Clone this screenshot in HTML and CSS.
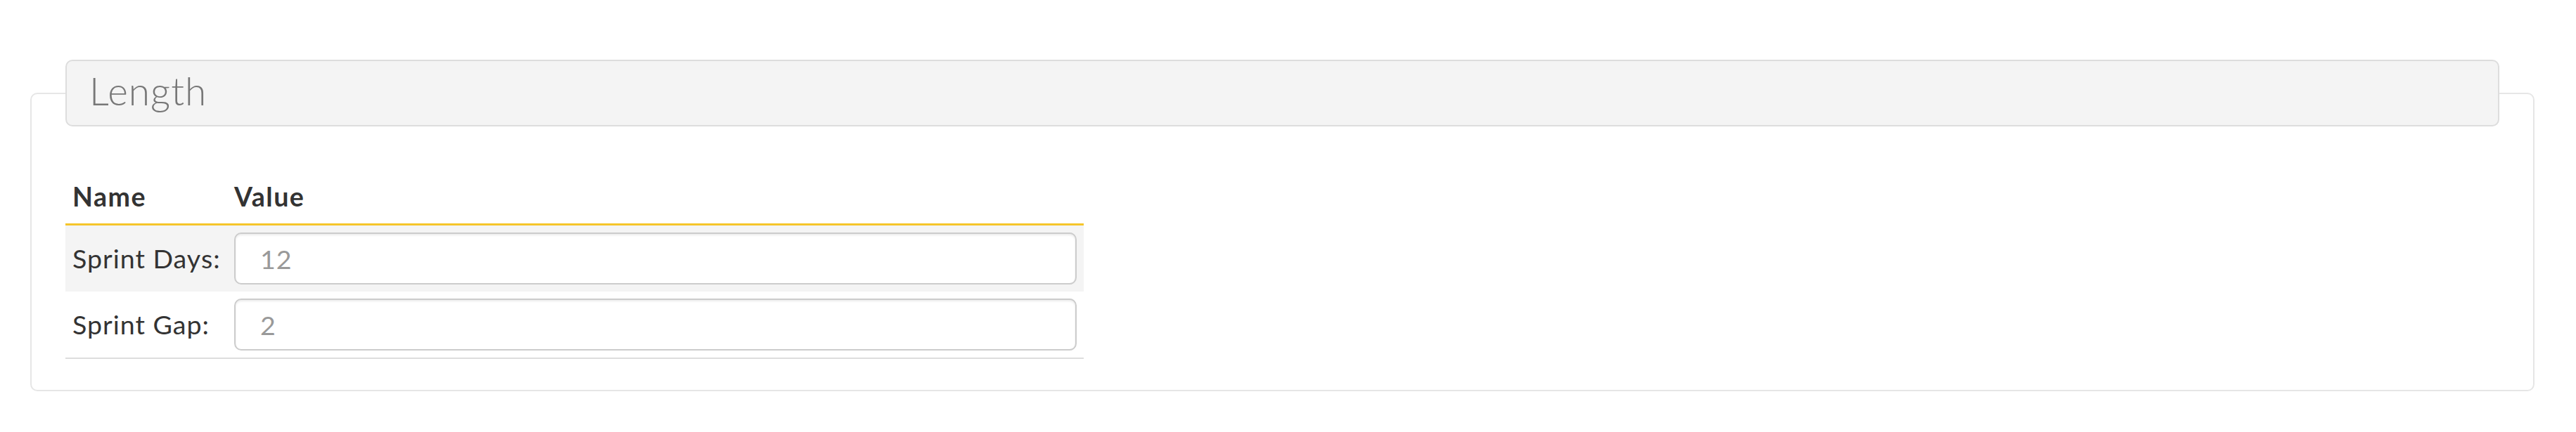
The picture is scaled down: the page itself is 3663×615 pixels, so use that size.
FILE: index.html
```html
<!DOCTYPE html>
<html lang="en">
<head>
  <meta charset="UTF-8">
  <meta name="viewport" content="width=device-width, initial-scale=1.0">
  <title>Sprint Settings</title>
  <link rel="stylesheet" href="styles.css">
</head>
<body>
  <!-- Sprint length settings -->
  <fieldset class="settings-group">
    <legend>Length</legend>
    <table class="settings-table">
      <thead>
        <tr>
          <th class="name-col">Name</th>
          <th>Value</th>
        </tr>
      </thead>
      <tbody>
        <tr class="striped">
          <td class="name-col"><label for="sprintDays">Sprint Days:</label></td>
          <td><input type="text" id="sprintDays" name="sprintDays" value="12"></td>
        </tr>
        <tr>
          <td class="name-col"><label for="sprintGap">Sprint Gap:</label></td>
          <td><input type="text" id="sprintGap" name="sprintGap" value="2"></td>
        </tr>
      </tbody>
    </table>
  </fieldset>
</body>
</html>
```

FILE: styles.css
```css
body {
  font-family: Lato, "Open Sans", sans-serif;
  font-size: 37.6px;
  line-height: 1.5;
  letter-spacing: 1px;
  color: #333;
  margin: 0;
  padding: 0;
  background-color: #fff;
}
.settings-group {
  margin: 85px 59px 0 43px;
  padding: 62px 48px 44px 48px;
  border: 2px solid #e6e6e6;
  border-radius: 10px;
  min-width: 0;
}
.settings-group legend {
  box-sizing: border-box;
  width: 100%;
  padding: 0 34px 6px 32px;
  background-color: #f4f4f4;
  border: 2px solid #ddd;
  border-radius: 10px;
  font-size: 55px;
  font-weight: 300;
  line-height: 85px;
  color: #777;
}
.settings-table {
  width: 1448px;
  border-collapse: collapse;
}
.settings-table th {
  text-align: left;
  font-weight: bold;
  letter-spacing: 1.5px;
  padding: 10px;
  border-bottom: 3px solid #f5c52a;
}
.settings-table td {
  padding: 10px;
  vertical-align: middle;
}
.settings-table .name-col {
  width: 212px;
  padding-right: 8px;
  white-space: nowrap;
}
.settings-table tr.striped td {
  background-color: #f4f4f4;
}
.settings-table tbody tr:last-child td {
  border-bottom: 2px solid #ddd;
}
.settings-table input {
  display: block;
  box-sizing: border-box;
  width: 100%;
  height: 74px;
  padding: 0 35px;
  font-family: inherit;
  font-size: 37.6px;
  letter-spacing: 1px;
  color: #999;
  background-color: #fff;
  border: 2px solid #ccc;
  border-radius: 10px;
  box-shadow: inset 0 2px 3px rgba(0, 0, 0, 0.08);
}
```
